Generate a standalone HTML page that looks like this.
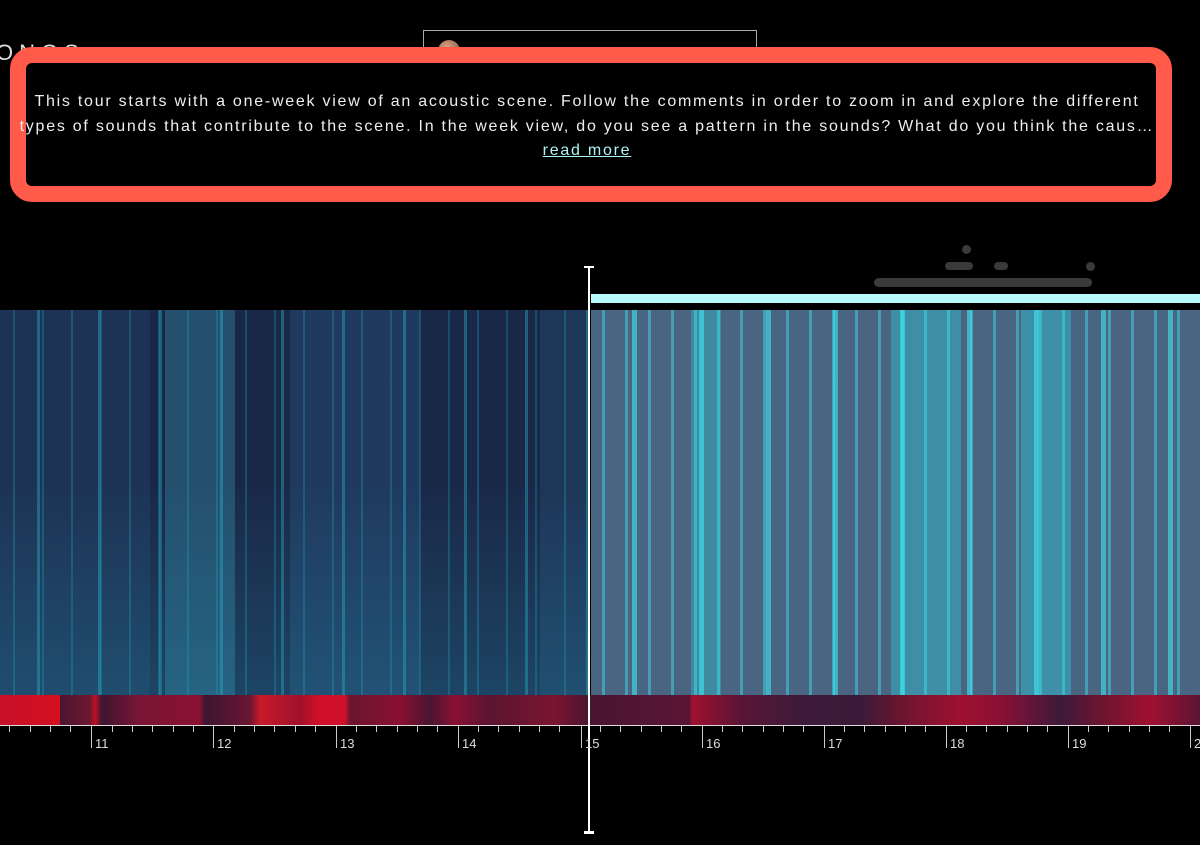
<!DOCTYPE html>
<html><head><meta charset="utf-8"><style>
html,body{margin:0;padding:0;background:#000;width:1200px;height:845px;overflow:hidden;font-family:"Liberation Sans",sans-serif;position:relative}
.abs{position:absolute}
#logo{left:-4px;top:40px;color:#ddd;font-size:22px;letter-spacing:6px;font-weight:300}
#sel{left:423px;top:30px;width:332px;height:46px;border:1px solid #aaa}
#ava{left:438px;top:40px;width:22px;height:22px;border-radius:50%;background:radial-gradient(circle at 40% 35%,#d9a28a,#7a4a3a)}
#box{left:10px;top:47px;width:1130px;height:123px;border:16px solid #ff5a4a;border-radius:22px;background:#000}
#txt{left:-3px;top:90px;width:1180px;text-align:center;color:#eee;font-size:16px;letter-spacing:1.75px;line-height:24.5px;white-space:nowrap}
#txt a{color:#aef5f5;text-decoration:underline}
.left{left:0;top:310px;width:588px;height:385px;background:
repeating-linear-gradient(90deg,transparent 0 13px,rgba(30,170,200,.28) 13px 15px,transparent 15px 29px),
repeating-linear-gradient(90deg,transparent 0 37px,rgba(40,200,220,.35) 37px 40px,transparent 40px 61px),
linear-gradient(90deg,#1d3355 0,#1d3355 150px,#1a2848 150px,#1a2848 165px,#24506e 165px,#24506e 235px,#1a2848 235px,#1a2848 290px,#1f3a5e 290px,#1f3a5e 420px,#1a2848 420px,#1a2848 540px,#1e3658 540px,#1e3658 588px)}
.left:after{content:"";position:absolute;left:0;right:0;top:0;bottom:0;background:linear-gradient(180deg,rgba(0,0,0,0) 45%,rgba(40,170,200,.22) 100%)}
.right{left:591px;top:310px;width:609px;height:385px;background:
repeating-linear-gradient(90deg,transparent 0 11px,rgba(60,230,240,.45) 11px 14px,transparent 14px 23px),
repeating-linear-gradient(90deg,transparent 0 41px,rgba(60,240,250,.55) 41px 46px,transparent 46px 67px),
linear-gradient(90deg,#4a6582 0,#4a6582 100px,#3f8aa0 100px,#3f8aa0 130px,#4a6582 130px,#4a6582 300px,#3e8ea5 300px,#3e8ea5 370px,#4a6582 370px,#4a6582 430px,#3e90a8 430px,#3e90a8 480px,#4a6582 480px)}
.heat{top:695px;height:30px;left:0;width:1200px;background:linear-gradient(90deg,#c8102a 0,#d41020 60px,#4a1530 60px,#701830 90px,#c01025 95px,#3e1530 102px,#7a1535 140px,#8a1030 200px,#3d1533 205px,#6a1530 250px,#c81a2a 260px,#a0102a 300px,#d01028 318px,#d01028 345px,#6a1530 350px,#8a1030 400px,#4a1530 430px,#8a1035 455px,#5a1530 490px,#7a1530 555px,#4a1530 590px,#5a1535 690px,#a01030 692px,#5a1535 740px,#3e1a3a 800px,#3a1a38 860px,#6a1530 900px,#a01030 960px,#8a1035 1000px,#3e1a3a 1060px,#6a1530 1100px,#a01030 1150px,#5a1535 1200px)}
#axis{left:0;top:725px;width:1200px;height:1px;background:#ddd}
.tk{position:absolute;top:726px;width:1px;height:6px;background:#ccc}
.mj{height:22px}
.lb{position:absolute;top:736px;color:#ddd;font-size:13px}
#vl{left:588px;top:268px;width:2px;height:565px;background:#fff}
#cb{left:591px;top:294px;width:609px;height:9px;background:#b8fafa}
.g{position:absolute;background:#3a3a3a;border-radius:5px}
</style></head><body>
<div class="abs" id="logo">ONGS</div>
<div class="abs" id="sel"></div>
<div class="abs" id="ava"></div>
<div class="g" style="left:962px;top:245px;width:9px;height:9px"></div>
<div class="g" style="left:945px;top:262px;width:28px;height:8px"></div>
<div class="g" style="left:994px;top:262px;width:14px;height:8px"></div>
<div class="g" style="left:1086px;top:262px;width:9px;height:9px"></div>
<div class="g" style="left:874px;top:278px;width:218px;height:9px"></div>
<div class="abs" id="box"></div>
<div class="abs" id="txt">This tour starts with a one-week view of an acoustic scene. Follow the comments in order to zoom in and explore the different<br>types of sounds that contribute to the scene. In the week view, do you see a pattern in the sounds? What do you think the caus…<br><a>read more</a></div>
<div class="abs left"></div>
<div class="abs right"></div>
<div class="abs heat"></div>
<div class="abs" id="axis"></div>
<div class="abs" id="cb"></div>
<div class="abs" id="vl"></div>
<div class="abs" style="left:584px;top:266px;width:10px;height:2px;background:#fff"></div>
<div class="abs" style="left:584px;top:831px;width:10px;height:3px;background:#fff"></div>
<div>
<div class="tk" style="left:9px"></div><div class="tk" style="left:30px"></div><div class="tk" style="left:50px"></div><div class="tk" style="left:70px"></div>
<div class="tk mj" style="left:91px"></div><span class="lb" style="left:95px">11</span>
<div class="tk" style="left:112px"></div><div class="tk" style="left:132px"></div><div class="tk" style="left:152px"></div><div class="tk" style="left:173px"></div><div class="tk" style="left:193px"></div>
<div class="tk mj" style="left:213px"></div><span class="lb" style="left:217px">12</span>
<div class="tk" style="left:234px"></div><div class="tk" style="left:254px"></div><div class="tk" style="left:274px"></div><div class="tk" style="left:295px"></div><div class="tk" style="left:315px"></div>
<div class="tk mj" style="left:336px"></div><span class="lb" style="left:340px">13</span>
<div class="tk" style="left:356px"></div><div class="tk" style="left:376px"></div><div class="tk" style="left:397px"></div><div class="tk" style="left:417px"></div><div class="tk" style="left:437px"></div>
<div class="tk mj" style="left:458px"></div><span class="lb" style="left:462px">14</span>
<div class="tk" style="left:478px"></div><div class="tk" style="left:498px"></div><div class="tk" style="left:519px"></div><div class="tk" style="left:539px"></div><div class="tk" style="left:559px"></div>
<div class="tk mj" style="left:581px"></div><span class="lb" style="left:585px">15</span>
<div class="tk" style="left:600px"></div><div class="tk" style="left:620px"></div><div class="tk" style="left:641px"></div><div class="tk" style="left:661px"></div><div class="tk" style="left:681px"></div>
<div class="tk mj" style="left:702px"></div><span class="lb" style="left:706px">16</span>
<div class="tk" style="left:722px"></div><div class="tk" style="left:742px"></div><div class="tk" style="left:763px"></div><div class="tk" style="left:783px"></div><div class="tk" style="left:803px"></div>
<div class="tk mj" style="left:824px"></div><span class="lb" style="left:828px">17</span>
<div class="tk" style="left:844px"></div><div class="tk" style="left:864px"></div><div class="tk" style="left:885px"></div><div class="tk" style="left:905px"></div><div class="tk" style="left:925px"></div>
<div class="tk mj" style="left:946px"></div><span class="lb" style="left:950px">18</span>
<div class="tk" style="left:966px"></div><div class="tk" style="left:986px"></div><div class="tk" style="left:1007px"></div><div class="tk" style="left:1027px"></div><div class="tk" style="left:1047px"></div>
<div class="tk mj" style="left:1068px"></div><span class="lb" style="left:1072px">19</span>
<div class="tk" style="left:1088px"></div><div class="tk" style="left:1108px"></div><div class="tk" style="left:1129px"></div><div class="tk" style="left:1149px"></div><div class="tk" style="left:1169px"></div>
<div class="tk mj" style="left:1190px"></div><span class="lb" style="left:1194px">20</span>
</div>
</body></html>
